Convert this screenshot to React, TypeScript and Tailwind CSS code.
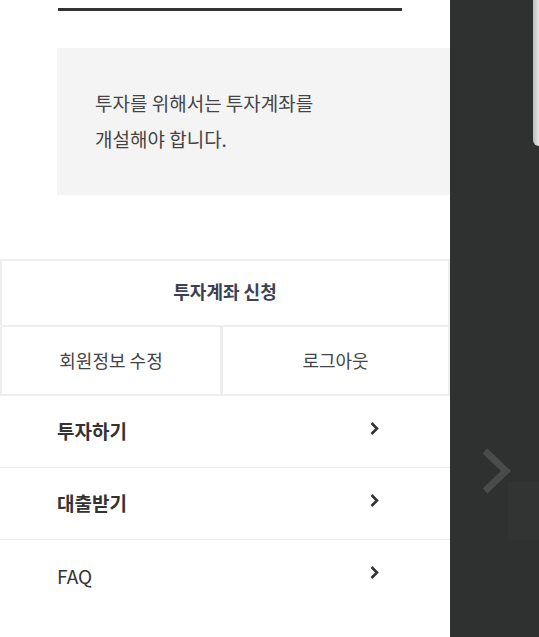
const font = { fontFamily: '"Noto Sans CJK KR", "Noto Sans", sans-serif' };

const menu = [
  { label: "투자하기", bold: true },
  { label: "대출받기", bold: true },
  { label: "FAQ", bold: false },
];

function Chevron() {
  return (
    <svg width="11" height="16" viewBox="0 0 11 16" fill="none" className="-mt-[6px]">
      <polyline points="2.5,2 8,7.5 2.5,13" stroke="#333" strokeWidth="2.6" />
    </svg>
  );
}

export default function App() {
  return (
    <div className="flex h-[637px] w-[539px] overflow-hidden" style={font}>
      <div className="w-[450px] shrink-0 bg-white">
        <div className="ml-[58px] mt-[8px] h-[3px] w-[344px] bg-[#333]" />

        <div className="ml-[57px] mt-[37px] h-[147px] bg-[#f4f4f4] pl-[38px] pt-[37px] text-[19px] leading-[36px] text-[#444]">
          <p>투자를 위해서는 투자계좌를</p>
          <p>개설해야 합니다.</p>
        </div>

        <div className="mt-[64px]">
          <button className="flex h-[68px] w-full items-center justify-center border-2 border-[#eee] pb-[4px] text-[18px] font-bold text-[#3a4252]">
            투자계좌 신청
          </button>
          <div className="flex h-[69px] border-x-2 border-b-2 border-[#eee] text-[18px] text-[#444]">
            <button className="flex w-[221px] items-center justify-center border-r-[3px] border-[#eee]">
              회원정보 수정
            </button>
            <button className="flex flex-1 items-center justify-center">로그아웃</button>
          </div>
        </div>

        <ul>
          {menu.map((m, i) => (
            <li
              key={m.label}
              className={
                "flex h-[72px] items-center justify-between pl-[57px] pr-[70px] text-[19px] text-[#333] " +
                (i < menu.length - 1 ? "border-b border-[#eee]" : "")
              }
            >
              <span className={m.bold ? "font-bold" : "font-normal"}>{m.label}</span>
              <Chevron />
            </li>
          ))}
        </ul>
      </div>

      <div className="relative flex-1 bg-[#2f3030]">
        <div className="absolute right-0 top-0 h-[146px] w-[6px] rounded-bl-[6px] bg-gradient-to-r from-[#bdbdbd] to-[#e6e6e6]" />
        <div className="absolute bottom-[97px] right-0 h-[58px] w-[31px] bg-[#323333]" />
        <svg
          className="absolute left-[31px] top-[446px]"
          width="34"
          height="50"
          viewBox="0 0 34 50"
          fill="none"
        >
          <polyline points="4,5 25,25 4,45" stroke="#4a4b4b" strokeWidth="7" />
        </svg>
      </div>
    </div>
  );
}
